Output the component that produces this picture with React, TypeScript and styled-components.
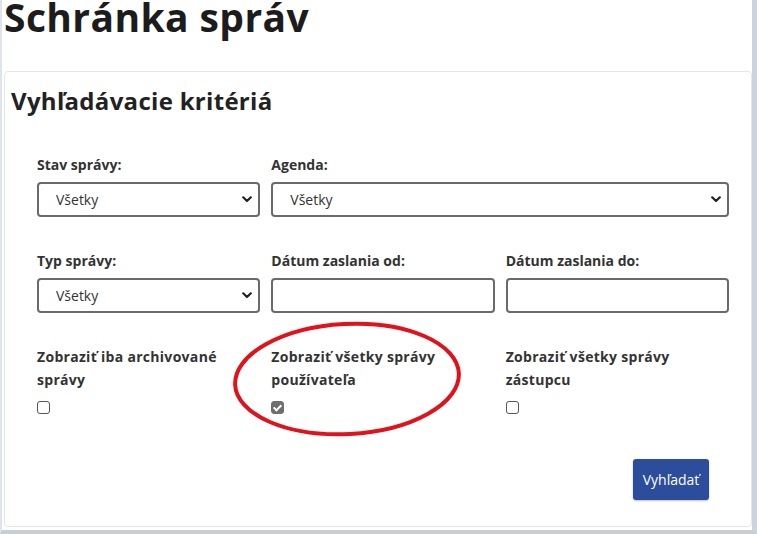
import React from 'react';
import styled, { createGlobalStyle } from 'styled-components';

const GlobalStyle = createGlobalStyle`
    html, body {
        margin: 0;
        padding: 0;
        background: #ffffff;
    }
    body {
        font-family: "Open Sans", "Liberation Sans", sans-serif;
        color: #333333;
    }
`;

type Option = { label: string; kind: 'select' | 'input' | 'check'; wide?: boolean; checked?: boolean };

const rows: { gap: number; fields: Option[] }[] = [
    {
        gap: 34,
        fields: [
            { label: 'Stav správy:', kind: 'select' },
            { label: 'Agenda:', kind: 'select', wide: true },
        ],
    },
    {
        gap: 32,
        fields: [
            { label: 'Typ správy:', kind: 'select' },
            { label: 'Dátum zaslania od:', kind: 'input' },
            { label: 'Dátum zaslania do:', kind: 'input' },
        ],
    },
    {
        gap: 0,
        fields: [
            { label: 'Zobraziť iba archivované správy', kind: 'check' },
            { label: 'Zobraziť všetky správy používateľa', kind: 'check', checked: true },
            { label: 'Zobraziť všetky správy zástupcu', kind: 'check' },
        ],
    },
];

const Chevron = () => (
    <svg width="10" height="7" viewBox="0 0 10 7" aria-hidden="true">
        <path d="M1.2 1.3 L5 5 L8.8 1.3" fill="none" stroke="#222" strokeWidth="2.2" strokeLinecap="round" strokeLinejoin="round" />
    </svg>
);

function Field({ label, kind, wide, checked }: Option) {
    return (
        <Cell $wide={wide}>
            <Label $check={kind === 'check'}>{label}</Label>
            {kind === 'select' && (
                <SelectBox>
                    <Select defaultValue="all">
                        <option value="all">Všetky</option>
                    </Select>
                    <Chevron />
                </SelectBox>
            )}
            {kind === 'input' && <TextInput type="text" />}
            {kind === 'check' && <Check type="checkbox" defaultChecked={checked} $on={checked} />}
        </Cell>
    );
}

export default function App() {
    return (
        <>
            <GlobalStyle />
            <Page>
                <Title>Schránka správ</Title>
                <Card>
                    <CardTitle>Vyhľadávacie kritériá</CardTitle>
                    <Form>
                        {rows.map((row, i) => (
                            <Row key={i} $gap={row.gap}>
                                {row.fields.map((f) => <Field key={f.label} {...f} />)}
                            </Row>
                        ))}
                        <Actions>
                            <SearchButton type="button">Vyhľadať</SearchButton>
                        </Actions>
                    </Form>
                </Card>
                <Annotation width="757" height="534" viewBox="0 0 757 534">
                    <ellipse cx="345" cy="379" rx="112" ry="55" transform="rotate(-3 345 379)"
                        fill="none" stroke="#e1121b" strokeWidth="4" />
                </Annotation>
            </Page>
        </>
    );
}

const Page = styled.div`
    position: relative;
    width: 757px;
    height: 534px;
    box-sizing: border-box;
    border-left: 2px solid #dfe4ec;
    border-right: 5px solid #cdd3dc;
    border-bottom: 4px solid #c9ced6;
    padding: 0 0 0 2px;
    overflow: hidden;
`;

const Title = styled.h1`
    margin: 0;
    font-size: 39px;
    line-height: 34px;
    font-weight: 700;
    color: #1c1c1c;
    letter-spacing: 0.4px;
    padding-top: 0;
`;

const Card = styled.section`
    margin-top: 37px;
    height: 456px;
    box-sizing: border-box;
    border: 1px solid #e4e6ea;
    border-radius: 4px;
    padding: 13px 0 0 6px;
`;

const CardTitle = styled.h2`
    margin: 0;
    font-size: 24px;
    line-height: 32px;
    font-weight: 700;
    color: #222222;
    letter-spacing: 0.3px;
`;

const Form = styled.form`
    margin-top: 38px;
    padding: 0 22px 0 26px;
`;

const Row = styled.div<{ $gap: number }>`
    display: grid;
    grid-template-columns: repeat(3, 1fr);
    column-gap: 11px;
    margin-bottom: ${(p) => p.$gap}px;
`;

const Cell = styled.div<{ $wide?: boolean }>`
    display: flex;
    flex-direction: column;
    grid-column: ${(p) => (p.$wide ? 'span 2' : 'span 1')};
`;

const Label = styled.label<{ $check?: boolean }>`
    font-size: 14px;
    font-weight: 700;
    line-height: ${(p) => (p.$check ? '23px' : '20px')};
    letter-spacing: ${(p) => (p.$check ? '0.3px' : '0')};
    color: #333333;
    margin-bottom: ${(p) => (p.$check ? '10px' : '7px')};
    padding-right: 16px;
`;

const SelectBox = styled.div`
    display: flex;
    align-items: center;
    height: 35px;
    box-sizing: border-box;
    border: 2px solid #6a6a6a;
    border-radius: 4px;
    padding: 0 6px 0 0;
    background: #fff;
`;

const Select = styled.select`
    flex: 1;
    appearance: none;
    border: none;
    outline: none;
    background: transparent;
    padding: 0 0 0 17px;
    font-family: "Open Sans", "Liberation Sans", sans-serif;
    font-size: 14px;
    color: #333333;
    height: 100%;
`;

const TextInput = styled.input`
    height: 35px;
    box-sizing: border-box;
    border: 2px solid #6a6a6a;
    border-radius: 4px;
    padding: 0 12px;
    font-family: "Open Sans", "Liberation Sans", sans-serif;
    font-size: 14px;
`;

const Check = styled.input<{ $on?: boolean }>`
    appearance: none;
    margin: 0;
    width: 13px;
    height: 13px;
    box-sizing: border-box;
    border: 1.5px solid ${(p) => (p.$on ? '#6e6e6e' : '#555555')};
    border-radius: 3px;
    background: #fff;
    display: grid;
    place-content: center;
    &:checked {
        background: #6e6e6e;
    }
    &:checked::after {
        content: '';
        width: 3px;
        height: 6px;
        margin-top: -2px;
        border: solid #fff;
        border-width: 0 2px 2px 0;
        transform: rotate(45deg);
    }
`;

const Actions = styled.div`
    display: flex;
    justify-content: flex-end;
    margin-top: 45px;
`;

const SearchButton = styled.button`
    width: 76px;
    height: 41px;
    margin-right: 20px;
    border: none;
    border-radius: 3px;
    background: #2c4c9c;
    color: #ffffff;
    font-family: "Open Sans", "Liberation Sans", sans-serif;
    font-size: 14px;
    box-shadow: 0 1px 2px rgba(0, 0, 0, 0.25);
`;

const Annotation = styled.svg`
    position: absolute;
    top: 0;
    left: 0;
    pointer-events: none;
`;
